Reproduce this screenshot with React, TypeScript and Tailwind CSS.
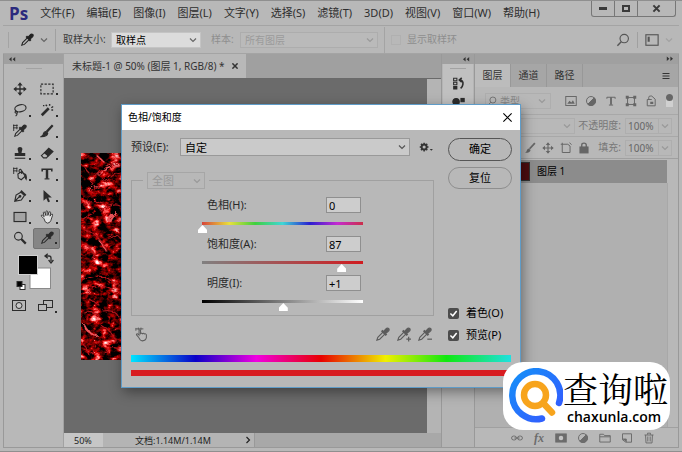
import { useState, type ReactNode } from 'react';
import clsx from 'clsx';

const menus = [
  '文件(F)',
  '编辑(E)',
  '图像(I)',
  '图层(L)',
  '文字(Y)',
  '选择(S)',
  '滤镜(T)',
  '3D(D)',
  '视图(V)',
  '窗口(W)',
  '帮助(H)',
];

interface IconProps {
  children: ReactNode;
  className?: string;
  fill?: string;
}

// 16x16 grid, stroked by default
function Icon({ children, className = 'size-4', fill = 'none' }: IconProps) {
  return (
    <svg
      viewBox="0 0 16 16"
      fill={fill}
      stroke="currentColor"
      strokeWidth="1.3"
      aria-hidden="true"
      className={clsx('shrink-0', className)}
    >
      {children}
    </svg>
  );
}

function DropperShape() {
  return (
    <>
      <path d="M9 5 L3 11 L2 14 L5 13 L11 7" strokeWidth="1.2" />
      <path d="M7.2 3.8 L12.2 8.8" strokeWidth="2.4" />
      <path
        d="M9 5 L11.4 2.4 Q13 .6 14.6 1.6 Q15.8 3.4 13.8 4.8 L11 7 Z"
        fill="currentColor"
      />
    </>
  );
}

function Chevron({ className }: { className?: string }) {
  return (
    <svg
      viewBox="0 0 8 8"
      fill="none"
      stroke="currentColor"
      strokeWidth="1.2"
      aria-hidden="true"
      className={clsx('size-2 shrink-0', className)}
    >
      <path d="M1 2.5 L4 5.5 L7 2.5" />
    </svg>
  );
}

interface PickerProps {
  label: string;
  value: string;
  className?: string;
  selectClassName?: string;
  disabled?: boolean;
}

function Picker({
  label,
  value,
  className,
  selectClassName,
  disabled,
}: PickerProps) {
  return (
    <span className={clsx('relative flex', className)}>
      <select
        aria-label={label}
        disabled={disabled}
        className={clsx(
          'w-full appearance-none rounded-none border leading-none outline-none',
          selectClassName,
        )}
      >
        <option>{value}</option>
      </select>
      <Chevron className="pointer-events-none absolute inset-y-0 right-1 my-auto" />
    </span>
  );
}

function RedTexture({ className }: { className?: string }) {
  return (
    <svg aria-hidden="true" className={className}>
      <filter
        id="fibers"
        x="0"
        y="0"
        width="100%"
        height="100%"
        colorInterpolationFilters="sRGB"
      >
        <feTurbulence
          type="turbulence"
          baseFrequency="0.07 0.085"
          numOctaves="3"
          seed="11"
        />
        <feColorMatrix
          values="-3 -1.6 0 0 1.02  -2.6 -2 0 0 0.4  -2.6 -2 0 0 0.42  0 0 0 0 1"
          result="veins"
        />
        <feTurbulence
          type="fractalNoise"
          baseFrequency="0.1 0.14"
          numOctaves="4"
          seed="4"
        />
        <feColorMatrix values="3.6 0 0 0 -1.5  4 0 0 0 -2.5  4 0 0 0 -2.5  0 0 0 0 1" />
        <feBlend in2="veins" mode="screen" />
      </filter>
      <filter id="rough" x="0" y="0" width="100%" height="100%">
        <feTurbulence type="fractalNoise" baseFrequency="0.2" numOctaves="2" />
        <feDisplacementMap in="SourceGraphic" scale="6" />
        <feGaussianBlur stdDeviation="0.4" />
      </filter>
      <rect width="100%" height="100%" filter="url(#fibers)" />
      <g filter="url(#rough)">
        <rect width="100%" height="100%" fill="none" />
        <g fill="none" strokeLinecap="round" stroke="#b3161c" strokeWidth="1.2">
          <path d="M8 34 Q20 12 38 10 M12 40 Q26 22 40 20 M16 2 L24 10 M2 12 L8 20" />
          <path d="M4 52 Q12 46 22 50 M20 58 Q30 48 38 52 M2 66 L12 60" />
          <path d="M4 77 Q14 80 20 88 L26 98 M28 84 Q36 80 40 86 M6 92 Q14 100 12 108" />
          <path d="M2 128 Q14 120 26 125 L38 132 M6 140 Q18 127 34 138 M8 146 L18 152" />
          <path d="M22 158 Q34 156 38 164 M4 160 Q12 156 18 164 M20 172 Q32 178 36 190" />
          <path d="M10 200 L18 188 M24 200 Q28 192 38 196 M4 192 L8 202" />
        </g>
        <g fill="none" strokeLinecap="round" stroke="#f0565c">
          <path d="M18 22 Q26 14 38 13" strokeWidth="1.6" />
          <path d="M28 68 Q31 61 35 60" strokeWidth="2.2" />
          <path d="M8 38 Q12 32 16 33 M17 4 L22 8 M18 87 L25 98" strokeWidth="1.2" />
          <path d="M3 172 Q7 181 15 182" strokeWidth="2" />
        </g>
      </g>
    </svg>
  );
}

const tools: { name: string; flyout?: boolean; icon: ReactNode }[] = [
  {
    name: '移动工具',
    icon: (
      <>
        <path d="M8 2 V14 M2 8 H14" strokeWidth="1.5" />
        <path
          d="M8 .4 L11 4 H5 Z M8 15.6 L11 12 H5 Z M.4 8 L4 5 V11 Z M15.6 8 L12 5 V11 Z"
          fill="currentColor"
          stroke="none"
        />
      </>
    ),
  },
  {
    name: '矩形选框工具',
    flyout: true,
    icon: <rect x="1" y="2.5" width="14" height="11" strokeDasharray="2.6 1.6" />,
  },
  {
    name: '套索工具',
    flyout: true,
    icon: (
      <>
        <ellipse cx="8.5" cy="6" rx="6.5" ry="4" transform="rotate(-12 8.5 6)" />
        <path d="M4 9 Q2 9.5 2.5 11 Q4 12.5 5 11 Q5 9.5 3.6 9.6 M4.6 11.6 Q5 13.5 3 15" />
      </>
    ),
  },
  {
    name: '魔棒工具',
    flyout: true,
    icon: (
      <>
        <path d="M2 14 L10 6" strokeWidth="3" />
        <path d="M8 3.5 L6.5 2 M11 3 V1 M13 5.5 L15 4 M13 8 H15 M5 3 H3.4" strokeWidth="1.6" />
      </>
    ),
  },
  {
    name: '颜色取样器',
    icon: (
      <>
        <DropperShape />
        <path d="M0 1.6 H5.4 M0 4.4 H5.4 M.8 .6 V8 M4.4 .6 V6" strokeWidth="1" />
      </>
    ),
  },
  {
    name: '画笔工具',
    flyout: true,
    icon: (
      <>
        <path d="M14.5 1.5 L7.5 9" strokeWidth="2.6" />
        <path
          d="M6.5 8.5 L8.8 10.6 Q8 14.5 1.5 14.4 Q3.8 13 4 10.8 Q4.6 8.8 6.5 8.5"
          fill="currentColor"
        />
      </>
    ),
  },
  {
    name: '仿制图章工具',
    flyout: true,
    icon: (
      <>
        <path
          d="M8 1 Q11 1 10.7 4 Q10 6 9.8 8 H14 V11.5 H2 V8 H6.2 Q6 6 5.3 4 Q5 1 8 1"
          fill="currentColor"
          stroke="none"
        />
        <path d="M2 14 H14" />
      </>
    ),
  },
  {
    name: '橡皮擦工具',
    flyout: true,
    icon: (
      <>
        <path d="M1.6 11 L5.2 7.6 L9.6 11 L7.4 13.5 H4 Z" />
        <path d="M5.2 7.6 L10 2.6 L14.8 6.4 L9.6 11.4 Z" fill="currentColor" />
      </>
    ),
  },
  {
    name: '历史记录画笔',
    flyout: true,
    icon: (
      <>
        <path d="M0 1.6 H5 M0 4.4 H5 M.8 .6 V8 M4.4 .6 V6" strokeWidth="1" />
        <path d="M5.6 8 L10.4 5 L14 10.5 L9.4 14.5 L6 12.5 Z M7.5 7 Q6 3 8.5 2.5 Q10 3 10 8" />
        <path d="M13 7.5 Q16 9 15 14 Q13.6 12 13.8 10" fill="currentColor" />
      </>
    ),
  },
  {
    name: '横排文字工具',
    flyout: true,
    icon: (
      <>
        <path d="M2.5 5 V2.6 H13.5 V5" strokeWidth="1.8" />
        <path d="M8 2.5 V13.5" strokeWidth="2.8" />
        <path d="M5.2 13.6 H10.8" />
      </>
    ),
  },
  {
    name: '钢笔工具',
    flyout: true,
    icon: (
      <>
        <path d="M2 14 L3.5 7 L9 3.6 L13 7.4 L9.5 12.6 Z M2 14 L7.4 8.8" />
        <circle cx="8" cy="8.4" r="1" fill="currentColor" />
        <path d="M9 2 L14.6 7.4" strokeWidth="2" />
      </>
    ),
  },
  {
    name: '路径选择工具',
    flyout: true,
    icon: (
      <path
        d="M4 1 L13.5 9.8 H9.4 L11.4 14.2 L9.2 15 L7.2 10.6 L4 13.4 Z"
        fill="currentColor"
        stroke="none"
      />
    ),
  },
  {
    name: '矩形工具',
    flyout: true,
    icon: <rect x="1.2" y="2.8" width="13.6" height="10.4" fill="#a4a4a4" />,
  },
  {
    name: '抓手工具',
    flyout: true,
    icon: (
      <path
        d="M4.6 10 L1.6 7 Q1 5.6 2.6 5.8 L4.8 7.6 L3.8 3 Q4.2 1.6 5.4 2.6 L6.8 6.4 L6.8 1.6 Q7.8 .4 8.8 1.6 L9 6.2 L10.4 2.2 Q11.6 1.4 12.2 2.6 L11.4 7 L13.2 4.6 Q14.8 4.4 14.4 6 L12.4 12 Q11.4 15 8.4 15 Q5.4 14.4 4.6 10"
        fill="#e4e4e4"
        strokeWidth="1"
      />
    ),
  },
  {
    name: '缩放工具',
    icon: (
      <>
        <circle cx="6.2" cy="6" r="4.4" />
        <path d="M9.4 9.2 L14.6 14.4" strokeWidth="2.6" />
      </>
    ),
  },
  { name: '吸管工具', flyout: true, icon: <DropperShape /> },
];

function Toolbox() {
  return (
    <aside className="flex w-[60px] shrink-0 flex-col border-r border-[#a2a2a2] bg-[#b8b8b8] text-[#2c2c2c]">
      <div className="h-[10px] bg-[#a0a0a0] pl-1">
        <DoubleArrow />
      </div>
      <div className="mx-auto mt-1 h-px w-4 bg-[#a2a2a2]" />
      <div className="mt-[9px] ml-[2px] grid h-[171px] w-[54px] grid-cols-2 grid-rows-8">
        {tools.map((t) => (
          <button
            key={t.name}
            type="button"
            title={t.name}
            className={clsx(
              'relative grid place-items-center',
              t.name === '吸管工具' && 'rounded-[2px] border border-[#747474] bg-[#868686]',
            )}
          >
            <Icon className="size-[14px]">{t.icon}</Icon>
            {t.flyout && (
              <span className="absolute right-[2px] bottom-1 size-[2px] bg-[#2c2c2c]" />
            )}
          </button>
        ))}
      </div>
      <svg viewBox="0 0 54 64" className="mt-[2px] ml-px h-16 w-[54px]">
        <rect x="25" y="17" width="20.5" height="20.5" fill="#fff" stroke="#8a8a8a" />
        <rect x="13.5" y="4.5" width="19" height="19" fill="#000" stroke="#d0d0d0" />
        <path
          d="M41 5 H44 Q46 5 46 7 V10 M42.8 2.8 L40 5 L42.8 7.2 M43.6 9 L46 12 L48.4 9"
          fill="none"
          stroke="#2c2c2c"
          strokeWidth="1.3"
        />
        <rect x="15" y="33.5" width="5" height="5" fill="#fff" stroke="#2c2c2c" />
        <rect x="12" y="30.5" width="5" height="5" fill="#000" stroke="#2c2c2c" />
        <g fill="none" stroke="#2c2c2c">
          <rect x="7.5" y="49.5" width="13" height="10" />
          <circle cx="14" cy="54.5" r="3" fill="#c8c8c8" />
          <rect x="38.5" y="49.5" width="9" height="7" />
          <rect x="33.5" y="53.5" width="8" height="6" fill="#b8b8b8" />
        </g>
        <rect x="50" y="60" width="2" height="2" fill="#2c2c2c" />
      </svg>
    </aside>
  );
}

function DoubleArrow({ flip }: { flip?: boolean }) {
  return (
    <svg
      viewBox="0 0 8 10"
      aria-hidden="true"
      className={clsx('h-[10px] w-2 text-[#333]', flip && 'rotate-180')}
    >
      <path
        d="M1 5.2 L3.6 3 V7.4 Z M4.6 5.2 L7.2 3 V7.4 Z"
        fill="currentColor"
      />
    </svg>
  );
}

function TitleBar() {
  return (
    <header className="flex h-[25px] items-center border-b border-[#a4a4a4] pl-[6px]">
      <span className="mr-3 font-['Open_Sans','Noto_Sans',sans-serif] text-[17px] leading-none font-bold text-[#2b2a7d]">
        Ps
      </span>
      <nav className="flex gap-3 text-[11px] text-[#2e2e2e]">
        {menus.map((m) => (
          <button key={m} type="button" className="whitespace-nowrap">
            {m}
          </button>
        ))}
      </nav>
      <div className="mr-[3px] ml-auto flex h-4 self-start rounded-b-[3px] border border-t-0 border-[#777] text-[#3a3a3a]">
        <button
          type="button"
          aria-label="最小化"
          className="grid w-[23px] place-items-center border-r border-[#777]"
        >
          <span className="h-[3px] w-2 bg-[#3a3a3a]" />
        </button>
        <button
          type="button"
          aria-label="最大化"
          className="grid w-[23px] place-items-center border-r border-[#777]"
        >
          <span className="h-[7px] w-2 border-2 border-[#3a3a3a]" />
        </button>
        <button
          type="button"
          aria-label="关闭"
          className="grid w-[37px] place-items-center"
        >
          <Icon className="size-[9px]">
            <path d="M2.5 2.5 L13.5 13.5 M13.5 2.5 L2.5 13.5" strokeWidth="3.6" />
          </Icon>
        </button>
      </div>
    </header>
  );
}

function OptionsBar() {
  return (
    <section className="flex h-[28px] items-center border-b border-[#a4a4a4] pl-[5px] text-[10px] text-[#3a3a3a]">
      <span className="h-4 w-px bg-[#a4a4a4]" />
      <Icon className="ml-[11px] size-[14px] text-[#222]">
        <DropperShape />
      </Icon>
      <Chevron className="ml-[6px] text-[#666]" />
      <span className="mx-[7px] h-[22px] w-px bg-[#a0a0a0]" />
      <span className="w-12">取样大小:</span>
      <Picker
        label="取样大小"
        value="取样点"
        className="w-[90px] text-[#666]"
        selectClassName="h-4 border-[#c4c4c4] bg-[#dcdcdc] pl-1 text-black"
      />
      <span className="ml-[10px] w-[29px] text-[#8e8e8e]">样本:</span>
      <Picker
        label="样本"
        value="所有图层"
        disabled
        className="w-[138px] text-[#9a9a9a]"
        selectClassName="h-4 border-[#adadad] bg-[#bababa] pl-1"
      />
      <span className="mx-[6px] h-[26px] w-px bg-[#a4a4a4]" />
      <label className="flex items-center gap-[6px] whitespace-nowrap text-[#8e8e8e]">
        <input
          type="checkbox"
          disabled
          className="size-[10px] appearance-none border border-[#b0b0b0]"
        />
        显示取样环
      </label>
      <div className="mr-[6px] ml-auto flex items-center text-[#555]">
        <button type="button" aria-label="搜索">
          <Icon className="size-[14px]">
            <circle cx="9.4" cy="6.4" r="4.8" />
            <path d="M6 10 L1.6 14.6" strokeWidth="1.6" />
          </Icon>
        </button>
        <span className="mx-[7px] h-4 w-px bg-[#a0a0a0]" />
        <button type="button" aria-label="工作区">
          <Icon className="size-[14px]">
            <rect x="1" y="2" width="14" height="12" />
            <path d="M3 4.2 H5.4 V10 H3 Z" fill="currentColor" stroke="none" />
          </Icon>
        </button>
        <Chevron className="ml-[6px] text-[#a2a2a2]" />
      </div>
    </section>
  );
}

function DocumentArea() {
  return (
    <main className="flex min-w-0 flex-1 flex-col bg-[#a0a0a0]">
      <div className="flex h-[25px] border-b border-[#6a6a6a]">
        <div className="flex items-center gap-[7px] bg-[#b8b8b8] pr-2 pl-2 text-[10px] whitespace-nowrap text-[#333]">
          未标题-1 @ 50% (图层 1, RGB/8) *
          <button type="button" aria-label="关闭文档">
            <Icon className="size-[6px]">
              <path d="M1 1 L15 15 M15 1 L1 15" strokeWidth="4" />
            </Icon>
          </button>
        </div>
      </div>
      <div className="flex flex-1">
        <div className="flex-1 bg-[#6b6b6b] pt-[74px] pl-[17px]">
          <RedTexture className="h-[207px] w-[310px] max-w-full" />
        </div>
        <div className="w-[14px] bg-[#b4b4b4]" />
      </div>
      <footer className="flex h-[14px] items-center bg-[#a8a8a8] text-[9px] leading-none text-[#222]">
        <span className="flex h-full w-[39px] items-center bg-[#c6c6c6] pl-[10px]">
          50%
        </span>
        <span className="flex h-full w-[152px] items-center justify-between border-r border-[#999] bg-[#b4b4b4] pr-[2px] pl-8">
          文档:1.14M/1.14M
          <Chevron className="-rotate-90" />
        </span>
      </footer>
    </main>
  );
}

function SideDock() {
  return (
    <div className="flex w-[34px] shrink-0 flex-col border-x border-[#999] bg-[#b4b4b4]">
      <div className="flex h-[10px] justify-end bg-[#a0a0a0] pr-1">
        <DoubleArrow />
      </div>
      <div className="mx-px h-[58px] bg-[#c0c0c0] pt-1 text-[#2c2c2c]">
        <div className="mx-auto h-px w-4 bg-[#a2a2a2]" />
        <Icon className="mx-auto mt-2 size-[13px]">
          <path d="M2 1.5 H6 V4.5 H2 Z M2 6.5 H6 V9.5 H2 Z" />
          <path d="M1.4 11 H6.6 V15.4 H1.4 Z" fill="currentColor" stroke="none" />
          <path d="M9 3.5 Q14.4 4 13.4 9 Q13 12 10.6 14 M12 1 L9 3.6 L12 6.4" strokeWidth="2" />
        </Icon>
        <Icon className="mx-auto mt-[6px] size-[13px]">
          <circle cx="5" cy="7" r="4" fill="currentColor" />
          <rect x="11" y="3" width="4" height="4" fill="currentColor" />
        </Icon>
      </div>
    </div>
  );
}

const filterIcons = [
  {
    name: '像素图层滤镜',
    icon: (
      <>
        <rect x="1" y="2" width="14" height="12" />
        <path d="M3 11.6 L6 7.6 L8.4 10 L10.6 7 L13 11.6 Z" fill="currentColor" stroke="none" />
      </>
    ),
  },
  { name: '调整图层滤镜', icon: <AdjustmentShape /> },
  {
    name: '文字图层滤镜',
    icon: (
      <>
        <path d="M2.5 5 V3 H13.5 V5 M5.2 13.4 H10.8" />
        <path d="M8 3 V13" strokeWidth="2.4" />
      </>
    ),
  },
  {
    name: '形状图层滤镜',
    icon: (
      <>
        <rect x="3.4" y="3.4" width="9.2" height="9.2" />
        <path
          d="M1 1 H5 V5 H1 Z M11 1 H15 V5 H11 Z M1 11 H5 V15 H1 Z M11 11 H15 V15 H11 Z"
          fill="currentColor"
          stroke="none"
        />
      </>
    ),
  },
  {
    name: '智能对象滤镜',
    icon: (
      <>
        <path d="M5 6 V3 Q5 1.4 7 1.4 H9 L13.6 5.6 V14.4 H3 V6 H9" />
        <path d="M7 9 H11 V12 H7 Z" fill="currentColor" stroke="none" />
      </>
    ),
  },
];

const footerIcons = [
  {
    name: '链接图层',
    icon: (
      <>
        <rect x="0.8" y="5.4" width="6.4" height="5.2" rx="2.6" />
        <rect x="8.8" y="5.4" width="6.4" height="5.2" rx="2.6" />
        <path d="M4.5 8 H11.5" />
      </>
    ),
  },
  { name: '图层样式', icon: null },
  {
    name: '添加图层蒙版',
    icon: (
      <>
        <rect x="1" y="2.6" width="14" height="10.8" fill="currentColor" />
        <circle cx="8" cy="8" r="3" fill="#c4c4c4" stroke="none" />
      </>
    ),
  },
  { name: '新建调整图层', icon: <AdjustmentShape /> },
  {
    name: '新建组',
    icon: <path d="M1 13.4 V3 H6 L7.4 4.8 H15 V13.4 Z M1 6.4 H15" />,
  },
  {
    name: '新建图层',
    icon: (
      <>
        <path d="M2 2.4 H14 V13.6 H6.4 L2 10.4 Z" />
        <path d="M2.4 9.4 H7 V13.4" fill="currentColor" />
      </>
    ),
  },
  {
    name: '删除图层',
    icon: (
      <path d="M2 4 H14 M6 3.6 V1.6 H10 V3.6 M3.4 4 L4 14.6 H12 L12.6 4 M6.4 6 V12.6 M9.6 6 V12.6" />
    ),
  },
];

function AdjustmentShape() {
  return (
    <>
      <circle cx="8" cy="8" r="6" />
      <path d="M3.7 12.3 A6 6 0 0 0 12.3 3.7 Z" fill="currentColor" />
    </>
  );
}

function LayersPanel() {
  return (
    <aside className="flex w-[204px] shrink-0 flex-col border-r border-[#999] bg-[#b8b8b8] text-[10px] text-[#555]">
      <div className="flex h-[10px] justify-end bg-[#a0a0a0] pr-1">
        <DoubleArrow flip />
      </div>
      <div className="flex h-[23px] bg-[#a6a6a6] text-[#333]">
        {['图层', '通道', '路径'].map((t, i) => (
          <button
            key={t}
            type="button"
            className={clsx(
              'w-9 border-r border-[#989898]',
              i === 0 && 'bg-[#bcbcbc]',
            )}
          >
            {t}
          </button>
        ))}
        <button type="button" aria-label="面板菜单" className="mr-2 ml-auto">
          <Icon className="size-2">
            <path d="M1 3 H15 M1 8 H15 M1 13 H15" strokeWidth="2" />
          </Icon>
        </button>
      </div>
      <div className="flex h-7 items-center border-b border-[#a8a8a8] pr-[5px] pl-[10px] text-[#666]">
        <div className="flex h-4 w-[66px] items-center gap-[3px] border border-[#aeaeae] pl-px">
          <Icon className="size-[10px]">
            <circle cx="9.4" cy="6.4" r="4.8" />
            <path d="M6 10 L1.6 14.6" />
          </Icon>
          <Picker
            label="滤镜类型"
            value="类型"
            className="flex-1 text-[#999]"
            selectClassName="border-0 pl-0 text-[#888]"
          />
        </div>
        <div className="ml-auto flex items-center gap-2">
          {filterIcons.map((f) => (
            <button key={f.name} type="button" title={f.name}>
              <Icon className="size-3">{f.icon}</Icon>
            </button>
          ))}
        </div>
        <span className="ml-[9px] flex h-[13px] w-[7px] rounded-t-full bg-[#d0d0d0]">
          <span className="size-[7px] rounded-full bg-[#666]" />
        </span>
      </div>
      <div className="flex h-[22px] items-center border-b border-[#a8a8a8] pr-[6px] pl-[10px]">
        <Picker
          label="混合模式"
          value="正常"
          className="w-[90px] text-[#999]"
          selectClassName="h-4 border-[#aeaeae] pl-1"
        />
        <span className="mr-1 ml-auto text-[#777]">不透明度:</span>
        <PercentBox label="不透明度" />
      </div>
      <div className="flex h-[22px] items-center border-b border-[#a0a0a0] pr-[6px] pl-[10px] text-[#666]">
        <div className="mr-2 ml-auto flex gap-[6px]">
          <Icon className="size-3">
            <path d="M14.5 1.5 L7.5 9" strokeWidth="2.4" />
            <path
              d="M6.5 8.5 L8.8 10.6 Q8 14.5 1.5 14.4 Q3.8 13 4 10.8 Q4.6 8.8 6.5 8.5"
              fill="currentColor"
              stroke="none"
            />
          </Icon>
          <Icon className="size-3">{tools[0].icon}</Icon>
          <Icon className="size-3">
            <path d="M3 1 V14 H13.4 V5.4 L10.4 3 H1 M12.6 1 L15.4 3.4" />
          </Icon>
          <Icon className="size-3">
            <rect x="2.6" y="6.6" width="10.8" height="8" fill="currentColor" />
            <path d="M5 7 V4 Q5 1.4 8 1.4 Q11 1.4 11 4 V7" strokeWidth="1.8" />
          </Icon>
        </div>
        <span className="mr-1 text-[#777]">填充:</span>
        <PercentBox label="填充" />
      </div>
      <div className="mt-px mr-[11px] flex h-[23px] items-center bg-[#8c8c8c] pl-[21px] text-black">
        <span className="mr-[7px] h-[19px] w-[34px] border border-[#333] bg-[#4d0d10]" />
        图层 1
      </div>
      <div className="mr-[10px] flex-1 border-r border-[#a8a8a8] bg-[#b0b0b0]" />
      <footer className="flex h-5 items-center justify-end gap-[10px] border-t border-[#a0a0a0] pr-[23px] text-[#6c6c6c]">
        {footerIcons.map((f) => (
          <button
            key={f.name}
            type="button"
            title={f.name}
            className="grid size-3 place-items-center"
          >
            {f.icon ? (
              <Icon className="size-3">{f.icon}</Icon>
            ) : (
              <span className="font-['Liberation_Serif',serif] text-[12px] leading-none font-bold italic">
                fx
              </span>
            )}
          </button>
        ))}
      </footer>
    </aside>
  );
}

function PercentBox({ label }: { label: string }) {
  return (
    <span className="flex h-4 items-center border border-[#aeaeae] text-[#666]">
      <input
        aria-label={label}
        defaultValue="100%"
        className="w-[32px] pl-[2px] leading-none outline-none"
      />
      <span className="grid h-full w-[13px] place-items-center border-l border-[#aeaeae]">
        <Chevron className="text-[#999]" />
      </span>
    </span>
  );
}

interface SliderRowProps {
  id: string;
  label: string;
  min: number;
  max: number;
  initial: number;
  signed?: boolean;
  track: string;
}

function SliderRow({ id, label, min, max, initial, signed, track }: SliderRowProps) {
  const [value, setValue] = useState(initial);

  return (
    <div className="h-[39px]">
      <div className="flex h-4 items-center justify-between pr-[2px] pl-[5px]">
        <label htmlFor={id}>{label}</label>
        <input
          aria-label={label}
          value={signed && value > 0 ? `+${value}` : value}
          onChange={(e) => setValue(Number(e.target.value) || 0)}
          className="h-4 w-[35px] border border-[#8f8f8f] bg-[#cdcdcd] pl-[2px] text-[11px] leading-none text-black outline-none"
        />
      </div>
      <div className={clsx('mt-[9px] h-[3px]', track)} />
      <input
        id={id}
        type="range"
        min={min}
        max={max}
        value={value}
        onChange={(e) => setValue(Number(e.target.value))}
        className="-mx-1 block h-2 w-[169px] appearance-none bg-transparent [&::-webkit-slider-thumb]:h-2 [&::-webkit-slider-thumb]:w-[9px] [&::-webkit-slider-thumb]:appearance-none [&::-webkit-slider-thumb]:bg-white [&::-webkit-slider-thumb]:[clip-path:polygon(50%_0,100%_60%,100%_100%,0_100%,0_60%)]"
      />
    </div>
  );
}

function Check({ label }: { label: string }) {
  return (
    <label className="flex h-[22px] items-center gap-[7px] text-black">
      <span className="grid">
        <input
          type="checkbox"
          defaultChecked
          className="peer col-start-1 row-start-1 size-[11px] appearance-none rounded-[2px] bg-[#4c4c4c]"
        />
        <Icon className="pointer-events-none invisible col-start-1 row-start-1 size-[11px] text-white peer-checked:visible">
          <path d="M3.5 8 L7 11.4 L12.6 4.4" strokeWidth="2.2" />
        </Icon>
      </span>
      {label}
    </label>
  );
}

function HueDialog() {
  return (
    <div
      role="dialog"
      aria-label="色相/饱和度"
      className="absolute top-[103px] left-[121px] w-[400px] border border-[#5f9cc8] bg-[#b8b8b8] text-[11px] text-[#2a2a2a] shadow-[2px_4px_12px_rgba(0,0,0,0.4)]"
    >
      <div className="flex h-[25px] items-center justify-between bg-white pr-[7px] pl-[6px] text-[10px] text-black">
        色相/饱和度
        <button type="button" aria-label="关闭">
          <Icon className="size-[11px]">
            <path d="M2 2 L14 14 M14 2 L2 14" strokeWidth="1.6" />
          </Icon>
        </button>
      </div>
      <div className="flex justify-between pt-2 pr-2 pl-[9px]">
        <div className="w-[303px]">
          <div className="flex h-[18px] items-center">
            <span className="w-[49px]">预设(E):</span>
            <Picker
              label="预设"
              value="自定"
              className="w-[230px] text-[#555]"
              selectClassName="h-[18px] border-[#999] bg-[#cacaca] pl-1 text-black"
            />
            <button type="button" aria-label="预设选项" className="ml-[9px]">
              <svg viewBox="0 0 22 16" className="h-[10px] w-[14px]">
                <circle cx="8" cy="8" r="4" fill="none" stroke="#333" strokeWidth="3" />
                <path
                  d="M8 1 V3.5 M8 12.5 V15 M1 8 H3.5 M12.5 8 H15 M3 3 L5 5 M11 11 L13 13 M13 3 L11 5 M5 11 L3 13"
                  stroke="#333"
                  strokeWidth="2.4"
                />
                <path d="M17 11 H22 L19.5 14 Z" fill="#333" />
              </svg>
            </button>
          </div>
          <fieldset className="mt-4 h-[144px] border border-[#a0a0a0] pl-[70px]">
            <legend className="-ml-[59px] px-1">
              <Picker
                label="编辑范围"
                value="全图"
                disabled
                className="w-[58px] text-[#999]"
                selectClassName="h-[17px] border-[#a6a6a6] pl-1"
              />
            </legend>
            <div className="mt-2 w-[161px]">
              <SliderRow
                id="hue"
                label="色相(H):"
                min={0}
                max={360}
                initial={0}
                track="bg-[linear-gradient(to_right,#d8453a,#e8e03c_17%,#3fd03f_33%,#3fd6d6_50%,#2a1fd0_67%,#c42bd0_84%,#cc2f4a)]"
              />
              <SliderRow
                id="saturation"
                label="饱和度(A):"
                min={0}
                max={100}
                initial={87}
                track="bg-[linear-gradient(to_right,#808080,#d01c20)]"
              />
              <SliderRow
                id="lightness"
                label="明度(I):"
                min={-100}
                max={100}
                initial={1}
                signed
                track="bg-[linear-gradient(to_right,#000,#808080_50%,#fff)]"
              />
            </div>
          </fieldset>
          <div className="flex h-9 items-center pl-[3px] text-[#5c5c5c]">
            <button type="button" aria-label="在图像上拖动">
              <Icon className="size-[15px]">
                <path d="M2 2 H10 M2 1 V4 M4.6 .6 V3 M7.4 .6 V3" strokeWidth="1" />
                <path
                  d="M5 11 L2.6 8.4 Q2.6 7 4 7.4 L5.4 8.6 V3.6 Q6.2 2.4 7 3.6 V7 Q8.2 6 9 7.2 Q10.2 6.2 11 7.4 Q12.6 6.8 13.2 8.4 V11.4 Q12.4 14.8 9 14.8 Q6.4 14.6 5 11"
                  strokeWidth="1.1"
                />
              </Icon>
            </button>
            <div className="mr-[2px] ml-auto flex gap-[6px]">
              {['', 'M11 13 H16 M13.5 10.5 V15.5', 'M11 13 H16'].map((mark) => (
                <button key={mark} type="button" aria-label="吸管">
                  <Icon className="size-[15px]">
                    <DropperShape />
                    {mark && <path d={mark} />}
                  </Icon>
                </button>
              ))}
            </div>
          </div>
        </div>
        <div className="flex w-16 flex-col">
          <button
            type="button"
            className="h-[23px] rounded-full border border-[#555] text-black"
          >
            确定
          </button>
          <button
            type="button"
            className="mt-[6px] h-[22px] rounded-full border border-[#8e8e8e] text-black"
          >
            复位
          </button>
          <div className="mt-auto mb-[6px] whitespace-nowrap">
            <Check label="着色(O)" />
            <Check label="预览(P)" />
          </div>
        </div>
      </div>
      <div className="px-[9px] pt-[3px] pb-[11px]">
        <div className="h-[7px] bg-[linear-gradient(to_right,#00e5ff,#0a00c8_17%,#f000e0_33%,#e80000_50%,#f0f000_67%,#10e810_83%,#20e0e0)]" />
        <div className="mt-2 h-[6px] bg-[#d81c20]" />
      </div>
    </div>
  );
}

function SiteBadge() {
  return (
    <a
      href="#chaxunla"
      className="absolute right-3 bottom-[21px] flex h-[68px] items-center rounded-[20px] bg-white pr-[2px] pl-1 text-black"
    >
      <svg viewBox="0 0 56 56" className="size-[56px]" fill="none">
        <defs>
          <linearGradient id="ring" x1="0" y1="0" x2="1" y2="1">
            <stop offset="0" stopColor="#1590f8" />
            <stop offset="1" stopColor="#3657ff" />
          </linearGradient>
        </defs>
        <path
          d="M52 35 A24 24 0 1 0 35 50.5"
          stroke="url(#ring)"
          strokeWidth="6.5"
          strokeLinecap="round"
        />
        <circle cx="28" cy="27" r="11" stroke="#f7a41d" strokeWidth="6.5" />
        <path
          d="M37 36 L45 44.5"
          stroke="#f7a41d"
          strokeWidth="6.5"
          strokeLinecap="round"
        />
      </svg>
      <span className="flex flex-col items-start">
        <span className="font-['Noto_Serif_CJK_SC','Noto_Sans_CJK_SC',serif] text-[35px] leading-[42px]">
          查询啦
        </span>
        <span className="pl-1 font-['Open_Sans','Noto_Sans',sans-serif] text-[14px] leading-4 font-semibold">
          chaxunla.com
        </span>
      </span>
    </a>
  );
}

export default function App() {
  return (
    <div className="relative flex min-h-screen flex-col border-y border-[#8f8f8f] bg-[#b8b8b8] px-[3px] pb-[3px] font-['Noto_Sans','Noto_Sans_CJK_SC',sans-serif]">
      <TitleBar />
      <OptionsBar />
      <div className="flex flex-1 border-b border-l border-[#999]">
        <Toolbox />
        <DocumentArea />
        <SideDock />
        <LayersPanel />
      </div>
      <HueDialog />
      <SiteBadge />
    </div>
  );
}
